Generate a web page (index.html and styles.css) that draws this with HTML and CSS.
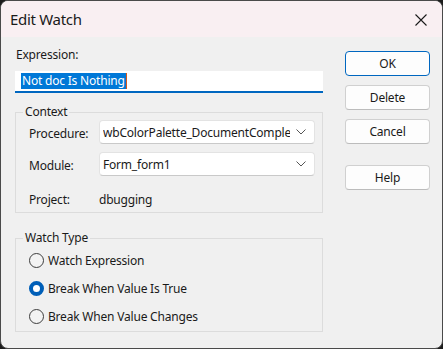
FILE: index.html
```html
<!DOCTYPE html>
<html lang="en">
<head>
    <meta charset="UTF-8">
    <title>Edit Watch</title>
    <link rel="stylesheet" href="styles.css">
</head>
<body>
    <div class="window">
        <div class="titlebar">
            <span class="title">Edit Watch</span>
            <span class="close">
                <svg width="12" height="12" viewBox="0 0 12 12">
                    <path d="M0.5 0.5 L11.5 11.5 M11.5 0.5 L0.5 11.5" stroke="#1a1a1a" stroke-width="1.1" fill="none"/>
                </svg>
            </span>
        </div>

        <div class="content">
            <div class="main">
                <div class="field-label">Expression:</div>
                <div class="text-input"><span class="selected">Not doc Is Nothing</span><span class="caret"></span></div>

                <fieldset class="group context">
                    <legend>Context</legend>
                    <div class="row">
                        <span class="row-label">Procedure:</span>
                        <div class="combo">
                            <span class="combo-text">wbColorPalette_DocumentCompleted</span>
                            <svg class="chevron" width="10" height="6" viewBox="0 0 10 6">
                                <path d="M0.5 0.5 L5 5 L9.5 0.5" stroke="#555" stroke-width="1" fill="none"/>
                            </svg>
                        </div>
                    </div>
                    <div class="row">
                        <span class="row-label">Module:</span>
                        <div class="combo">
                            <span class="combo-text">Form_form1</span>
                            <svg class="chevron" width="10" height="6" viewBox="0 0 10 6">
                                <path d="M0.5 0.5 L5 5 L9.5 0.5" stroke="#555" stroke-width="1" fill="none"/>
                            </svg>
                        </div>
                    </div>
                    <div class="row project">
                        <span class="row-label">Project:</span>
                        <span class="value">dbugging</span>
                    </div>
                </fieldset>

                <fieldset class="group watch-type">
                    <legend>Watch Type</legend>
                    <div class="radio-row"><span class="radio"></span>Watch Expression</div>
                    <div class="radio-row"><span class="radio checked"></span>Break When Value Is True</div>
                    <div class="radio-row"><span class="radio"></span>Break When Value Changes</div>
                </fieldset>
            </div>

            <div class="side">
                <button type="button" class="btn default">OK</button>
                <button type="button" class="btn">Delete</button>
                <button type="button" class="btn">Cancel</button>
                <button type="button" class="btn help">Help</button>
            </div>
        </div>
    </div>
</body>
</html>
```

FILE: styles.css
```css
* {
    box-sizing: border-box;
}

body {
    margin: 0;
    background-color: #1c1c1c;
    font-family: "Noto Sans", "Segoe UI", Arial, sans-serif;
    font-size: 12px;
    letter-spacing: -0.2px;
    color: #1a1a1a;
}

.window {
    width: 443px;
    height: 349px;
    border: 1px solid #4a4a4a;
    border-radius: 8px;
    background-color: #f0f0f0;
    overflow: hidden;
}

.titlebar {
    height: 36px;
    background-color: #f9eff2;
    display: flex;
    align-items: center;
    justify-content: space-between;
    padding: 0 15px 0 9px;
}

.title {
    font-size: 15px;
    letter-spacing: -0.3px;
    color: #1a1a1a;
}

.close {
    display: flex;
    margin-top: 1px;
}

.content {
    display: flex;
    gap: 22px;
    padding-left: 14px;
}

.main {
    width: 308px;
    padding-top: 10px;
}

.field-label {
    line-height: 16px;
    padding-left: 1px;
}

.text-input {
    margin-top: 8px;
    height: 22px;
    background-color: #fff;
    border-bottom: 2px solid #0067c0;
    padding: 2px 0 0 6px;
    display: flex;
    align-items: flex-start;
}

.selected {
    background-color: #0078d7;
    color: #fff;
    line-height: 16px;
    padding: 0 1px;
}

.caret {
    width: 1px;
    height: 16px;
    background-color: #d4571c;
}

.group {
    margin: 0;
    border: 1px solid #dcdcdc;
    min-width: 0;
}

.group legend {
    padding: 0 2px;
    margin-left: -6px;
    line-height: 14px;
}

.context {
    margin-top: 12px;
    padding: 1px 7px 1px 13px;
}

.row {
    display: flex;
    align-items: center;
    height: 24px;
    margin-bottom: 8px;
}

.row.project {
    margin-top: 11px;
    margin-bottom: 0;
}

.row-label {
    width: 70px;
    flex-shrink: 0;
    padding-top: 3px;
}

.row.project .row-label {
    padding-top: 0;
}

.combo {
    flex: 1;
    height: 24px;
    background-color: #fff;
    border: 1px solid #e3e3e3;
    border-bottom-color: #c9c9c9;
    border-radius: 4px;
    display: flex;
    align-items: center;
    padding: 0 8px 0 3px;
    overflow: hidden;
}

.combo-text {
    flex: 1;
    white-space: nowrap;
    overflow: hidden;
    margin-right: 6px;
}

.chevron {
    flex-shrink: 0;
}

.watch-type {
    margin-top: 18px;
    padding: 1px 7px 1px 13px;
}

.radio-row {
    display: flex;
    align-items: center;
    height: 28px;
}

.radio {
    width: 15px;
    height: 15px;
    border-radius: 50%;
    border: 1px solid #3d3d3d;
    background-color: #f3f3f3;
    margin-right: 4px;
    flex-shrink: 0;
}

.radio.checked {
    border: 4px solid #005fb8;
    background-color: #fff;
}

.side {
    width: 85px;
    padding-top: 14px;
    display: flex;
    flex-direction: column;
    gap: 9px;
}

.btn {
    height: 25px;
    width: 100%;
    padding: 0;
    font-family: inherit;
    font-size: 12px;
    letter-spacing: inherit;
    color: #1a1a1a;
    background-color: #fdfdfd;
    border: 1px solid #d0d0d0;
    border-bottom-color: #bcbcbc;
    border-radius: 4px;
}

.btn.default {
    border: 1px solid #0067c0;
}

.btn.help {
    margin-top: 12px;
}
```
